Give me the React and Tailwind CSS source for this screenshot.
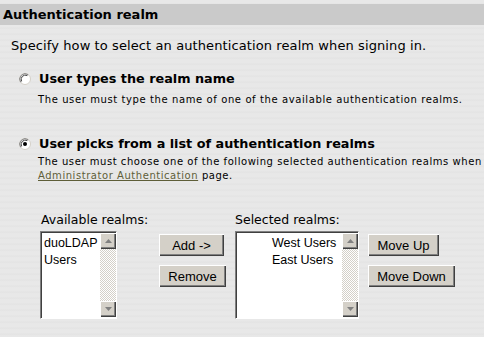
import React from "react";

function Radio({ checked }) {
  return (
    <svg width="12" height="12" viewBox="0 0 12 12" className="shrink-0">
      <circle cx="6" cy="6" r="5.5" fill="#ffffff" stroke="#d4d0c8" />
      <path d="M1.6 9.2 A5.5 5.5 0 0 1 9.2 1.6" fill="none" stroke="#808080" />
      <path d="M2.6 8.4 A4.3 4.3 0 0 1 8.4 2.6" fill="none" stroke="#404040" />
      {checked && <circle cx="6" cy="6" r="2" fill="#000000" />}
    </svg>
  );
}

function Arrow({ up }) {
  return (
    <div className="h-4 w-4 bg-[#d4d0c8] flex items-center justify-center shadow-[inset_1px_1px_0_#ffffff,inset_-1px_-1px_0_#404040,inset_-2px_-2px_0_#808080]">
      <svg width="7" height="4" viewBox="0 0 7 4">
        <polygon points={up ? "3.5,0 7,4 0,4" : "0,0 7,0 3.5,4"} fill="#808080" />
      </svg>
    </div>
  );
}

function ListBox({ items, width, indent }) {
  return (
    <div
      className={`${width} h-[88px] flex bg-white border border-t-[#808080] border-l-[#808080] border-b-white border-r-white shadow-[inset_1px_1px_0_#404040]`}
    >
      <div className={`flex-1 pt-[3px] ${indent} font-['Liberation_Sans',Arial,sans-serif] text-[12.5px] leading-[17px] text-black`}>
        {items.map((it) => (
          <div key={it}>{it}</div>
        ))}
      </div>
      <div className="w-4 flex flex-col mt-[1px] mb-[1px] bg-[repeating-conic-gradient(#d4d0c8_0%_25%,#ffffff_0%_50%)] bg-[length:2px_2px]">
        <Arrow up />
        <div className="flex-1" />
        <Arrow />
      </div>
    </div>
  );
}

function Btn({ children, width }) {
  return (
    <button
      className={`${width} h-[22px] bg-[#d4d0c8] text-black font-['Liberation_Sans',Arial,sans-serif] text-[13px] leading-none flex items-center justify-center shadow-[inset_1px_1px_0_#ffffff,inset_-1px_-1px_0_#404040,inset_-2px_-2px_0_#808080]`}
    >
      {children}
    </button>
  );
}

export default function App() {
  return (
    <div className="w-[484px] h-[337px] overflow-hidden bg-[#e7e7e7] bg-[repeating-linear-gradient(180deg,#e8e8e8_0px,#e8e8e8_3px,#e3e3e3_4px,#e9e9e9_6px)] pt-[4px] font-['DejaVu_Sans',Verdana,sans-serif] text-black">
      <div className="h-[21px] bg-[#cacaca] pl-[3px] flex items-center text-[13px] font-bold">
        Authentication realm
      </div>

      <p className="mt-[13px] pl-[11px] text-[13px] leading-[15px] tracking-[0.1px] whitespace-nowrap">
        Specify how to select an authentication realm when signing in.
      </p>

      <div className="mt-[18px] pl-[19px]">
        <div className="flex items-center gap-[8px] h-[16px]">
          <Radio />
          <span className="text-[12.8px] font-bold">User types the realm name</span>
        </div>
        <p className="mt-[7px] pl-[19px] text-[10px] leading-[12px] tracking-[0.6px] whitespace-nowrap">
          The user must type the name of one of the available authentication realms.
        </p>

        <div className="mt-[30px] flex items-center gap-[8px] h-[16px]">
          <Radio checked />
          <span className="text-[12.8px] font-bold whitespace-nowrap">User picks from a list of authentication realms</span>
        </div>
        <p className="mt-[3px] pl-[19px] text-[10px] leading-[14px] tracking-[0.55px] whitespace-nowrap">
          The user must choose one of the following selected authentication realms when
          <br />
          <a className="text-[#5e5e38] underline">Administrator Authentication</a> page.
        </p>
      </div>

      <div className="mt-[30px] pl-[40px] flex">
        <div className="w-[119px] shrink-0 flex flex-col">
          <div className="pl-[1px] text-[12.5px] leading-[14px] whitespace-nowrap">Available realms:</div>
          <div className="mt-[4px]">
            <ListBox items={["duoLDAP", "Users"]} width="w-[77px]" indent="pl-[3px]" />
          </div>
        </div>

        <div className="w-[76px] shrink-0 mt-[21px] flex flex-col gap-[9px]">
          <Btn width="w-[65px]">Add -&gt;</Btn>
          <Btn width="w-[67px]">Remove</Btn>
        </div>

        <div className="w-[133px] shrink-0 flex flex-col">
          <div className="text-[12.5px] leading-[14px] whitespace-nowrap">Selected realms:</div>
          <div className="mt-[4px]">
            <ListBox items={["West Users", "East Users"]} width="w-[124px]" indent="pl-[36px]" />
          </div>
        </div>

        <div className="shrink-0 mt-[21px] flex flex-col gap-[9px]">
          <Btn width="w-[71px]">Move Up</Btn>
          <Btn width="w-[87px]">Move Down</Btn>
        </div>
      </div>
    </div>
  );
}
